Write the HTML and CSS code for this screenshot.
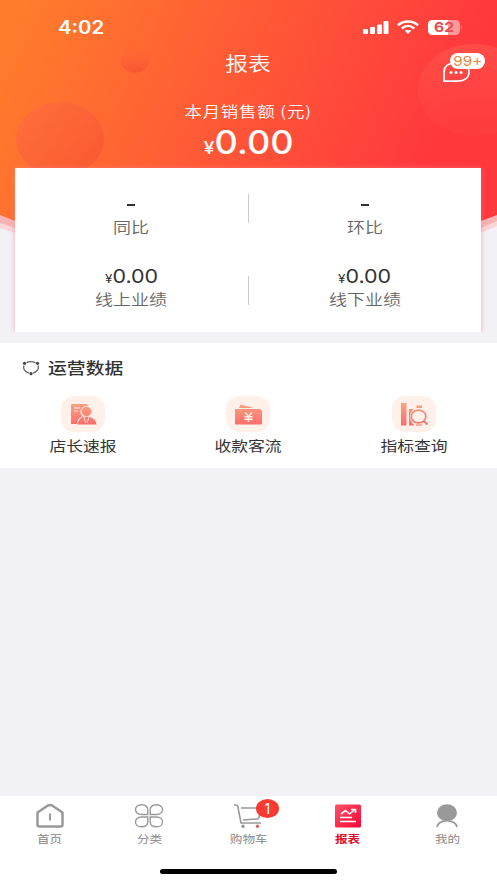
FILE: index.html
```html
<!DOCTYPE html>
<html lang="zh-CN">
<head>
<meta charset="utf-8">
<title>报表</title>
<link rel="stylesheet" href="styles.css">
</head>
<body>
<header class="hero">
  <svg class="hero-bg" viewBox="0 0 497 332">
    <defs>
      <linearGradient id="g" gradientUnits="userSpaceOnUse" x1="0" y1="60" x2="390" y2="240"><stop offset="0" stop-color="#ff7c2c"/><stop offset=".5" stop-color="#ff5a36"/><stop offset="1" stop-color="#ff383e"/></linearGradient>
      <linearGradient id="b" x1="0" y1="0" x2="1" y2="1"><stop offset="0" stop-color="#ff6a48" stop-opacity=".5"/><stop offset="1" stop-color="#f54e2c" stop-opacity=".6"/></linearGradient>
      <linearGradient id="p" x1="0" y1="0" x2="0" y2="1"><stop offset="0" stop-color="#ff6050" stop-opacity=".5"/><stop offset="1" stop-color="#ff4a44" stop-opacity=".2"/></linearGradient>
      <linearGradient id="s" x1="0" y1="0" x2="0" y2="1"><stop offset="0" stop-color="#ff6038" stop-opacity=".1"/><stop offset="1" stop-color="#f54e30" stop-opacity=".7"/></linearGradient>
    </defs>
    <path d="M0 0H497V226L481 233H15L0 228Z" fill="#fbd5d8"/>
    <path d="M0 0H497V221L481 228H15L0 223Z" fill="#fbb3b6"/>
    <path d="M0 0H497V215L481 221H15L0 215Z" fill="url(#g)"/>
    <ellipse cx="60" cy="139" rx="44" ry="37" fill="url(#b)"/>
    <ellipse cx="135" cy="61" rx="14" ry="11.500" fill="url(#s)"/>
    <ellipse cx="474" cy="90" rx="56" ry="46" fill="url(#p)"/>
  </svg>
  <div class="status">
    <span class="time">4:02</span>
    <svg class="signals" width="104" height="20" viewBox="0 0 104 20">
      <g fill="#fff"><rect x="0" y="11" width="5" height="5" rx="1"/><rect x="7" y="9" width="5" height="7" rx="1"/><rect x="14" y="6.500" width="5" height="9.500" rx="1"/><rect x="20.500" y="3" width="5" height="13" rx="1"/></g>
      <g fill="none" stroke="#fff" stroke-width="2.500"><path d="M35 7.200C40.500 2.300 49.500 2.300 55 7.200"/><path d="M38.800 10.500C42.500 7.300 47.500 7.300 51.200 10.500"/></g>
      <path d="M41.700 12.800C43.600 11.300 46.400 11.300 48.300 12.800L45 16Z" fill="#fff"/>
      <rect x="65" y="2" width="32" height="15" rx="4.500" fill="#ff9a9a"/>
      <path d="M69.500 2H85V17H69.500A4.500 4.500 0 0 1 65 12.500V6.500A4.500 4.500 0 0 1 69.500 2Z" fill="#fff"/>
      <path d="M98 7.500Q100 9.500 98 11.500Z" fill="#ff9a9a"/>
      <text x="81" y="14.300" text-anchor="middle" class="battery" textLength="20" lengthAdjust="spacingAndGlyphs">62</text>
    </svg>
  </div>
  <div class="title"><span class="wide">报表</span></div>
  <div class="message">
    <svg width="30" height="22" viewBox="0 0 30 22"><path d="M2 20.200V11C2 5.500 6 2 14 2C22 2 27 5.500 27 11C27 17 22 20.200 15 20.200Z" fill="none" stroke="#fff" stroke-width="1.700"/><g fill="#fff"><circle cx="9" cy="11.500" r="1.500"/><circle cx="14" cy="11.500" r="1.500"/><circle cx="19" cy="11.500" r="1.500"/></g></svg>
    <span class="message-count"><span>99+</span></span>
  </div>
  <div class="sales-label"><span class="wide">本月销售额 (元)</span></div>
  <div class="sales"><span class="amount"><small>¥</small>0.00</span></div>
  <section class="card">
    <div class="stat"><div class="dash"><i></i></div><div class="stat-label"><span class="wide">同比</span></div></div>
    <div class="rule"></div>
    <div class="stat"><div class="dash"><i></i></div><div class="stat-label"><span class="wide">环比</span></div></div>
    <div class="stat second"><div class="value"><span class="amount"><small>¥</small>0.00</span></div><div class="stat-label"><span class="wide">线上业绩</span></div></div>
    <div class="rule second"></div>
    <div class="stat second"><div class="value"><span class="amount"><small>¥</small>0.00</span></div><div class="stat-label"><span class="wide">线下业绩</span></div></div>
  </section>
</header>
<main class="panel">
  <h2><svg width="18" height="16" viewBox="0 0 18 16"><g fill="none" stroke="#666" stroke-width="1.300"><path d="M4.500 2.700Q9 .5 13.500 2.700M16 5.500C17.300 9 15 12 11 13.200M7 13.200C3 12 .7 9 2 5.500"/></g><g fill="#444"><circle cx="2.500" cy="3.300" r="1.600"/><circle cx="15.500" cy="3.300" r="1.600"/><circle cx="9" cy="13.700" r="1.600"/></g></svg><span class="wide">运营数据</span></h2>
  <div class="grid">
    <div class="entry">
      <div class="tile"><svg width="44" height="36" viewBox="0 0 44 36">
        <defs><linearGradient id="i" gradientUnits="userSpaceOnUse" x1="0" y1="7" x2="0" y2="30"><stop offset="0" stop-color="#fba583"/><stop offset="1" stop-color="#fc6a6b"/></linearGradient></defs>
        <path d="M11 8H25Q27 8 27 10V28H10V10Q10 8 11 8Z" fill="url(#i)"/><path d="M13 12H19M13 15H17" stroke="#fff0e9" stroke-width="1.200"/>
        <path d="M16 29C16 23 19 21 22 20.500C17 17 20 10 25.500 10C31 10 34 17 29 20.500C33 21.500 35.500 24 36 29Z" fill="#fff0e9"/>
        <ellipse cx="25.500" cy="15.500" rx="5" ry="4.700" fill="url(#i)"/><path d="M16.500 28.500C17 24 20 21.300 23 20.700H28C32 21.500 35 24 35.500 28.500Z" fill="url(#i)"/><path d="M23 21L24.800 27M28 21L26.200 27" stroke="#fff0e9" stroke-width=".9"/>
      </svg></div><span class="wide">店长速报</span>
    </div>
    <div class="entry">
      <div class="tile"><svg width="44" height="36" viewBox="0 0 44 36"><path d="M13 12L14.500 8.500L28 12Z M9 13H33Q36 13 36 15.500V27.500Q36 28.500 35 28.500H10Q9 28.500 9 27.500Z" fill="url(#i)"/><path d="M19 16.500L22.500 20.300L26 16.500M18.500 20.700H26.500M18.500 23.200H26.500M22.500 20.300V26" fill="none" stroke="#fff0e9" stroke-width="1.400"/></svg></div><span class="wide">收款客流</span>
    </div>
    <div class="entry">
      <div class="tile"><svg width="44" height="36" viewBox="0 0 44 36"><path d="M9 7H14.500V29.500H9ZM17 13H21.500Q17.500 17 18 21.500Q18.500 26 22.500 29.500H17ZM24.500 9.500H30V12H24.500ZM24 28.500H30V29.500H24Z" fill="url(#i)"/><ellipse cx="26.500" cy="20.500" rx="7.300" ry="6.400" fill="none" stroke="url(#i)" stroke-width="1.700"/><path d="M31.500 25L35.500 28.500" stroke="#fc7470" stroke-width="2"/></svg></div><span class="wide">指标查询</span>
    </div>
  </div>
</main>
<nav class="tabs">
  <div class="tab"><svg width="32" height="26" viewBox="0 0 32 26"><path d="M3.500 9.500L13.500 2.800Q16 1.300 18.500 2.800L28.500 9.500V22Q28.500 23.500 26.500 23.500H5.500Q3.500 23.500 3.500 22Z" fill="none" stroke="#999" stroke-width="2.500" stroke-linejoin="round"/><path d="M16 10.500V17.500" stroke="#999" stroke-width="2"/></svg><span class="wide">首页</span></div>
  <div class="tab"><svg width="32" height="26" viewBox="0 0 32 26"><g fill="none" stroke="#999" stroke-width="1.400"><path d="M14.800 11.500H8.500C.5 11.500 .5 1.700 8.500 1.700C12.500 1.700 14.800 4 14.800 7ZM17.200 11.500H23.500C31.500 11.500 31.500 1.700 23.500 1.700C19.500 1.700 17.200 4 17.200 7ZM14.800 14H8.500C.5 14 .5 23.800 8.500 23.800C12.500 23.800 14.800 21.500 14.800 18.500ZM17.200 14H23.500C31.500 14 31.500 23.800 23.500 23.800C19.500 23.800 17.200 21.500 17.200 18.500Z"/></g></svg><span class="wide">分类</span></div>
  <div class="tab"><svg width="32" height="26" viewBox="0 0 32 26"><g fill="none" stroke="#999" stroke-width="1.600"><path d="M2 2H4.500Q5.500 2 5.700 3L9 20H29M9 5H29L27 14.500Q26.700 16 25 16L11 17"/></g><circle cx="11" cy="23.300" r="1.700" fill="#999"/><circle cx="25.500" cy="23.300" r="1.700" fill="#c76a68"/></svg><span class="wide">购物车</span><b class="badge">1</b></div>
  <div class="tab active"><svg width="32" height="26" viewBox="0 0 32 26"><defs><linearGradient id="r" x1="0" y1="0" x2="1" y2="1"><stop offset="0" stop-color="#ff5267"/><stop offset="1" stop-color="#fb0536"/></linearGradient></defs><rect x="3" y="1.500" width="26" height="23" rx="1.500" fill="url(#r)"/><path d="M9 11L13.500 7.500L17.500 11L23 6.500M19 6.500H23.500V10M8 14.500H20M8 18.500H24" fill="none" stroke="#fff" stroke-width="1.600"/></svg><span class="wide">报表</span></div>
  <div class="tab"><svg width="32" height="26" viewBox="0 0 32 26"><ellipse cx="16" cy="9.700" rx="10" ry="8.400" fill="#999"/><path d="M6.500 24C6.500 20.500 10 17 16 17C22 17 25.500 20.500 25.500 24" fill="#fff"/><path d="M6 24C6.500 20.500 10.500 17.600 16 17.600C21.500 17.600 25.500 20.500 26 24" fill="none" stroke="#999" stroke-width="1.900"/></svg><span class="wide">我的</span></div>
</nav>
<footer class="home"><i></i></footer>
</body>
</html>
```
FILE: styles.css
```css
* { box-sizing: border-box; }
body {
  margin: 0;
  width: 497px;
  height: 883px;
  overflow: hidden;
  display: flex;
  flex-direction: column;
  background: #f1f1f6;
  color: #333;
  font-family: Inter, "Noto Sans CJK SC", sans-serif;
}
svg { display: block; }
.wide { display: inline-block; transform: scaleX(1.2); white-space: nowrap; font-family: "Noto Sans CJK SC", sans-serif; }

.hero { position: relative; height: 332px; overflow: hidden; color: #fff; display: flex; flex-direction: column; }
.hero-bg { position: absolute; inset: 0; width: 497px; height: 332px; }
.hero > div, .card { position: relative; }
.status { height: 50px; padding: 18px 30px 0 58px; display: flex; justify-content: space-between; }
.time { font-size: 18px; line-height: 20px; font-weight: 600; transform: scaleX(1.13); transform-origin: left; }
.battery { font: 700 13.5px Inter, sans-serif; fill: #e8494e; }
.title { height: 45px; line-height: 26px; text-align: center; font-size: 19px; font-weight: 350; }
.hero > .message { position: absolute; left: 442px; top: 61px; }
.message-count {
  position: absolute; left: 8px; top: -8px; width: 35px; height: 15.5px;
  border-radius: 8px; background: #fff; color: #e8873a;
  font-size: 13.5px; line-height: 16px; text-align: center;
}
.message-count span { display: inline-block; transform: scaleX(1.13); }
.sales-label { height: 31px; line-height: 31px; text-align: center; font-size: 14.5px; font-weight: 350; }
.sales-label .wide { letter-spacing: .7px; }
.sales { height: 42px; line-height: 33px; text-align: center; font-size: 32px; font-weight: 500; }
.amount { display: inline-block; transform: scaleX(1.13); }
.amount small { font-size: 17px; }
.card {
  margin: 0 16px 0 15px; height: 164px; padding-top: 24px; background: #fff; color: #333;
  display: grid; grid-template-columns: 1fr 1px 1fr; grid-template-rows: 73px 67px;
  box-shadow: 0 0 5px #ff7e8299;
}
.stat { text-align: center; }
.dash { height: 23px; padding-top: 12px; }
.dash i { display: block; width: 8px; height: 2px; margin: auto; background: #333; }
.stat-label { height: 24px; line-height: 24px; font-size: 15px; font-weight: 350; color: #666; }
.value { height: 22px; line-height: 23px; font-size: 19px; }
.value small { font-size: 12px; }
.rule { width: 1px; height: 29px; margin-top: 2px; background: #ccc; }
.rule.second { margin-top: 11px; }

.panel { margin-top: 11px; height: 125px; background: #fff; }
h2 { margin: 0; height: 53px; padding: 0 0 4px 22px; display: flex; align-items: center; gap: 8px; font-size: 15.7px; font-weight: 500; }
h2 .wide { transform-origin: left; }
.grid { display: grid; grid-template-columns: repeat(3, 1fr); }
.entry { display: flex; flex-direction: column; align-items: center; font-size: 14px; line-height: 27px; }
.tile { width: 44px; height: 36px; border-radius: 13px; background: #fff1ea; }

.tabs { margin-top: auto; height: 56px; padding-top: 7px; background: #fff; display: grid; grid-template-columns: repeat(5, 1fr); }
.tab { position: relative; display: flex; flex-direction: column; align-items: center; font-size: 10.5px; line-height: 20px; color: #888; }
.active { color: #e50a2d; font-weight: 700; }
.badge {
  position: absolute; left: 57px; top: -4px; width: 23px; height: 19px; border-radius: 50%;
  background: #fb3a32; color: #fff; font-size: 14px; line-height: 19px; font-weight: 400; text-align: center;
}
.home { height: 31px; padding-top: 17px; background: #fff; }
.home i { display: block; width: 177px; height: 5px; margin: 0 auto; border-radius: 3px; background: #000; }
```
